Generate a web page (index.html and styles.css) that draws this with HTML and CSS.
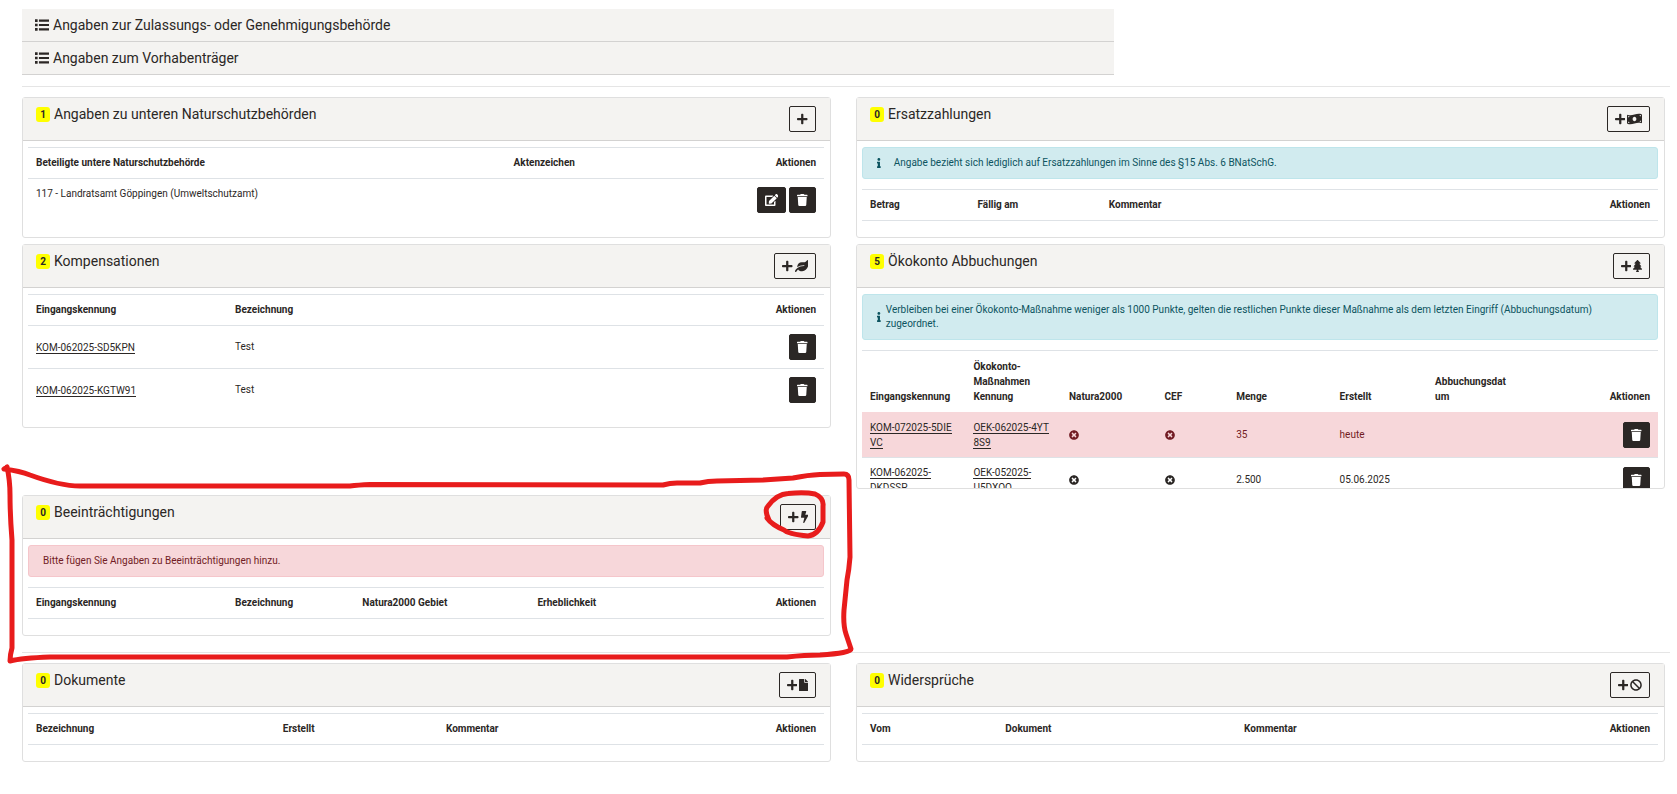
FILE: index.html
```
<!DOCTYPE html>
<html lang="de">
<head>
    <meta charset="UTF-8">
    <meta name="viewport" content="width=device-width, initial-scale=1.0">
    <title>Eingriff</title>
    <link rel="stylesheet" href="styles.css">
</head>
<body>
    <!-- Icon definitions, used through <use> below -->
    <svg class="icon-defs" aria-hidden="true">
        <defs>
            <path id="plus" d="M416 208H272V64c0-17.67-14.33-32-32-32h-32c-17.67 0-32 14.33-32 32v144H32c-17.67 0-32 14.33-32 32v32c0 17.67 14.33 32 32 32h144v144c0 17.67 14.33 32 32 32h32c17.67 0 32-14.33 32-32V304h144c17.67 0 32-14.33 32-32v-32c0-17.67-14.33-32-32-32z"/>
            <path id="trash" d="M432 32H312l-9.4-18.7A24 24 0 0 0 281.1 0H166.8a23.72 23.72 0 0 0-21.4 13.3L136 32H16A16 16 0 0 0 0 48v32a16 16 0 0 0 16 16h416a16 16 0 0 0 16-16V48a16 16 0 0 0-16-16zM53.2 467a48 48 0 0 0 47.9 45h245.8a48 48 0 0 0 47.9-45L416 128H32z"/>
            <path id="edit" d="M402.6 83.2l90.2 90.2c3.8 3.8 3.8 10 0 13.8L274.4 405.6l-92.8 10.3c-12.4 1.4-22.9-9.1-21.5-21.5l10.3-92.8L388.8 83.2c3.8-3.8 10-3.8 13.8 0zm162-22.9l-48.8-48.8c-15.2-15.2-39.9-15.2-55.2 0l-35.4 35.4c-3.8 3.8-3.8 10 0 13.8l90.2 90.2c3.8 3.8 10 3.8 13.8 0l35.4-35.4c15.2-15.3 15.2-40 0-55.2zM384 346.2V448H64V128h229.8c3.2 0 6.2-1.3 8.5-3.5l40-40c7.6-7.6 2.2-20.5-8.5-20.5H48C21.5 64 0 85.5 0 112v352c0 26.5 21.5 48 48 48h352c26.5 0 48-21.5 48-48V306.2c0-10.7-12.9-16-20.5-8.5l-40 40c-2.2 2.3-3.5 5.3-3.5 8.5z"/>
            <path id="leaf" d="M546.2 9.7c-5.6-12.5-21.6-13-28.3-1.2C486.9 62.4 431.4 96 368 96h-80C182 96 96 182 96 288c0 7 .8 13.7 1.5 20.5C161.3 262.8 253.4 224 384 224c8.8 0 16 7.2 16 16s-7.2 16-16 16C132.6 256 26 410.1 2.4 468c-6.6 16.3 1.2 34.9 17.5 41.6 16.4 6.8 35-1.1 41.8-17.3 1.5-3.6 20.9-47.9 71.9-90.6 32.4 43.9 94 85.8 174.9 77.2C465.5 467.5 576 326.7 576 154.3c0-50.2-10.8-102.2-29.8-144.6z"/>
            <path id="tree" d="M378.31 378.49L298.42 288h30.63c9.01 0 16.98-5 20.78-13.06 3.8-8.04 2.55-17.26-3.28-24.05L268.42 160h28.89c9.1 0 17.3-5.35 20.86-13.61 3.52-8.13 1.86-17.59-4.24-24.08L203.66 4.83c-6.03-6.45-17.28-6.45-23.32 0L70.06 122.31c-6.1 6.49-7.75 15.95-4.24 24.08C69.38 154.65 77.59 160 86.69 160h28.89l-78.14 90.91c-5.81 6.78-7.06 15.99-3.27 24.04C37.97 283 45.93 288 54.95 288h30.63L5.69 378.49c-6 6.79-7.36 16.09-3.56 24.26 3.75 8.05 12 13.25 21.01 13.25H160v24.45l-30.29 48.4c-5.32 10.64 2.42 23.16 14.31 23.16h95.96c11.89 0 19.63-12.52 14.31-23.16L224 440.45V416h136.86c9.01 0 17.26-5.2 21.01-13.25 3.8-8.17 2.44-17.47-3.56-24.26z"/>
            <path id="bolt" d="M296 160H180.6l42.6-129.8C227.2 15 215.7 0 200 0H56C44 0 33.8 8.9 32.2 20.8l-32 240C-1.7 275.2 9.5 288 24 288h118.7L96.6 482.5c-3.6 15.2 8 29.5 23.3 29.5 8.4 0 16.4-4.4 20.8-12l176-304c9.3-15.9-2.2-36-20.7-36z"/>
            <path id="file" d="M224 136V0H24C10.7 0 0 10.7 0 24v464c0 13.3 10.7 24 24 24h336c13.3 0 24-10.7 24-24V160H248c-13.2 0-24-10.8-24-24zm160-14.1v6.1H256V0h6.1c6.4 0 12.5 2.5 17 7l97.9 98c4.5 4.5 7 10.6 7 16.9z"/>
            <path id="ban" d="M256 8C119.034 8 8 119.033 8 256s111.034 248 248 248 248-111.034 248-248S392.967 8 256 8zm130.108 117.892c65.448 65.448 70 165.481 20.677 235.637L150.47 105.216c70.204-49.356 170.226-44.735 235.638 20.676zM125.892 386.108c-65.448-65.448-70-165.481-20.677-235.637L361.53 406.784c-70.203 49.356-170.226 44.736-235.638-20.676z"/>
            <path id="times" d="M256 8C119 8 8 119 8 256s111 248 248 248 248-111 248-248S393 8 256 8zm121.6 313.1c4.7 4.7 4.7 12.3 0 17L338 377.6c-4.7 4.7-12.3 4.7-17 0L256 312l-65.1 65.6c-4.7 4.7-12.3 4.7-17 0L134.4 338c-4.7-4.7-4.7-12.3 0-17l65.6-65-65.6-65.1c-4.7-4.7-4.7-12.3 0-17l39.6-39.6c4.7-4.7 12.3-4.7 17 0l65 65.7 65.1-65.6c4.7-4.7 12.3-4.7 17 0l39.6 39.6c4.7 4.7 4.7 12.3 0 17L312 256l65.6 65.1z"/>
            <path id="info" d="M20 424.229h20V279.771H20c-11.046 0-20-8.954-20-20V212c0-11.046 8.954-20 20-20h112c11.046 0 20 8.954 20 20v212.229h20c11.046 0 20 8.954 20 20V492c0 11.046-8.954 20-20 20H20c-11.046 0-20-8.954-20-20v-47.771c0-11.046 8.954-20 20-20zM96 0C56.235 0 24 32.235 24 72s32.235 72 72 72 72-32.235 72-72S135.764 0 96 0z"/>
            <path id="list" d="M0 48h96v96H0zM0 208h96v96H0zM0 368h96v96H0zM144 56h368v80H144zM144 216h368v80H144zM144 376h368v80H144z"/>
            <path id="money" d="M621.16 54.46C582.37 38.19 543.55 32 504.75 32c-123.17-.01-246.33 62.34-369.5 62.34-30.89 0-61.76-3.92-92.65-13.72-3.47-1.1-6.95-1.62-10.35-1.62C15.04 79 0 92.32 0 110.81v317.26c0 12.63 7.23 24.6 18.84 29.46C57.63 473.81 96.45 480 135.25 480c123.17 0 246.34-62.35 369.51-62.35 30.89 0 61.76 3.92 92.65 13.72 3.47 1.1 6.95 1.62 10.35 1.62 17.21 0 32.25-13.32 32.25-31.81V83.93c-.01-12.64-7.24-24.6-18.85-29.47zM48 132.22c20.12 5.04 41.12 7.57 62.72 8.93C104.84 170.54 79 192.69 48 192.69v-60.47zm0 285v-47.78c34.37 0 62.18 27.27 63.71 61.4-22.53-1.81-43.59-6.31-63.71-13.62zM320 352c-44.19 0-80-42.99-80-96 0-53.02 35.82-96 80-96s80 42.98 80 96c0 53.03-35.83 96-80 96zm272 27.78c-17.52-4.39-35.71-6.85-54.32-8.44 5.87-26.08 27.5-45.88 54.32-49.28v57.72zm0-236.11c-30.89-3.91-54.86-29.7-55.81-61.55 19.54 2.17 38.09 6.23 55.81 12.66v48.89z"/>
        </defs>
    </svg>

    <div class="accordion">
        <button type="button" class="accordion-item"><svg class="icon" viewBox="0 0 512 512"><use href="#list"/></svg>Angaben zur Zulassungs- oder Genehmigungsbehörde</button>
        <button type="button" class="accordion-item"><svg class="icon" viewBox="0 0 512 512"><use href="#list"/></svg>Angaben zum Vorhabenträger</button>
    </div>

    <hr>

    <div class="card-grid">
        <section class="card">
            <div class="card-header">
                <h5><span class="badge">1</span>Angaben zu unteren Naturschutzbehörden</h5>
                <button type="button" class="btn btn-outline" aria-label="Behörde hinzufügen"><svg class="icon" viewBox="0 0 448 512"><use href="#plus"/></svg></button>
            </div>
            <div class="card-body">
                <table class="table">
                    <colgroup><col class="w-60"><col><col class="w-10"></colgroup>
                    <thead>
                        <tr><th>Beteiligte untere Naturschutzbehörde</th><th>Aktenzeichen</th><th class="actions">Aktionen</th></tr>
                    </thead>
                    <tbody>
                        <tr>
                            <td>117 - Landratsamt Göppingen (Umweltschutzamt)</td>
                            <td></td>
                            <td class="actions">
                                <div class="btn-row">
                                    <button type="button" class="btn btn-dark" aria-label="Bearbeiten"><svg class="icon" viewBox="0 0 576 512"><use href="#edit"/></svg></button>
                                    <button type="button" class="btn btn-dark" aria-label="Löschen"><svg class="icon" viewBox="0 0 448 512"><use href="#trash"/></svg></button>
                                </div>
                            </td>
                        </tr>
                    </tbody>
                </table>
            </div>
        </section>

        <section class="card">
            <div class="card-header">
                <h5><span class="badge">0</span>Ersatzzahlungen</h5>
                <button type="button" class="btn btn-outline" aria-label="Ersatzzahlung hinzufügen"><svg class="icon" viewBox="0 0 448 512"><use href="#plus"/></svg><svg class="icon" viewBox="0 0 640 512"><use href="#money"/></svg></button>
            </div>
            <div class="card-body">
                <div class="alert alert-info alert-wide"><svg class="icon" viewBox="0 0 192 512"><use href="#info"/></svg>Angabe bezieht sich lediglich auf Ersatzzahlungen im Sinne des §15 Abs. 6 BNatSchG.</div>
                <table class="table">
                    <colgroup><col class="w-13-5"><col class="w-16-5"><col><col class="w-10"></colgroup>
                    <thead>
                        <tr><th>Betrag</th><th>Fällig am</th><th>Kommentar</th><th class="actions">Aktionen</th></tr>
                    </thead>
                    <tbody></tbody>
                </table>
            </div>
        </section>

        <section class="card">
            <div class="card-header">
                <h5><span class="badge">2</span>Kompensationen</h5>
                <button type="button" class="btn btn-outline" aria-label="Kompensation hinzufügen"><svg class="icon" viewBox="0 0 448 512"><use href="#plus"/></svg><svg class="icon" viewBox="0 0 576 512"><use href="#leaf"/></svg></button>
            </div>
            <div class="card-body">
                <table class="table table-middle">
                    <colgroup><col class="w-25"><col><col class="w-10"></colgroup>
                    <thead>
                        <tr><th>Eingangskennung</th><th>Bezeichnung</th><th class="actions">Aktionen</th></tr>
                    </thead>
                    <tbody>
                        <tr>
                            <td><a href="#">KOM-062025-SD5KPN</a></td>
                            <td>Test</td>
                            <td class="actions"><div class="btn-row"><button type="button" class="btn btn-dark" aria-label="Löschen"><svg class="icon" viewBox="0 0 448 512"><use href="#trash"/></svg></button></div></td>
                        </tr>
                        <tr>
                            <td><a href="#">KOM-062025-KGTW91</a></td>
                            <td>Test</td>
                            <td class="actions"><div class="btn-row"><button type="button" class="btn btn-dark" aria-label="Löschen"><svg class="icon" viewBox="0 0 448 512"><use href="#trash"/></svg></button></div></td>
                        </tr>
                    </tbody>
                </table>
            </div>
        </section>

        <section class="card card-scroll">
            <div class="card-header">
                <h5><span class="badge">5</span>Ökokonto Abbuchungen</h5>
                <button type="button" class="btn btn-outline" aria-label="Abbuchung hinzufügen"><svg class="icon" viewBox="0 0 448 512"><use href="#plus"/></svg><svg class="icon" viewBox="0 0 384 512"><use href="#tree"/></svg></button>
            </div>
            <div class="card-body">
                <div class="alert alert-info"><svg class="icon" viewBox="0 0 192 512"><use href="#info"/></svg><span>Verbleiben bei einer Ökokonto-Maßnahme weniger als 1000 Punkte, gelten die restlichen Punkte dieser Maßnahme als dem letzten Eingriff (Abbuchungsdatum) zugeordnet.</span></div>
                <table class="table table-middle">
                    <colgroup><col class="w-13"><col class="w-12"><col class="w-12"><col class="w-9"><col class="w-13"><col class="w-12"><col class="w-11"><col></colgroup>
                    <thead>
                        <tr><th>Eingangskennung</th><th>Ökokonto-Maßnahmen Kennung</th><th>Natura2000</th><th>CEF</th><th>Menge</th><th>Erstellt</th><th>Abbuchungsdatum</th><th class="actions">Aktionen</th></tr>
                    </thead>
                    <tbody>
                        <tr class="row-danger">
                            <td><a href="#">KOM-072025-5DIEVC</a></td>
                            <td><a href="#">OEK-062025-4YT8S9</a></td>
                            <td><svg class="icon icon-small" viewBox="0 0 512 512"><use href="#times"/></svg></td>
                            <td><svg class="icon icon-small" viewBox="0 0 512 512"><use href="#times"/></svg></td>
                            <td>35</td>
                            <td>heute</td>
                            <td></td>
                            <td class="actions"><div class="btn-row"><button type="button" class="btn btn-dark" aria-label="Löschen"><svg class="icon" viewBox="0 0 448 512"><use href="#trash"/></svg></button></div></td>
                        </tr>
                        <tr>
                            <td><a href="#">KOM-062025-DKDSSP</a></td>
                            <td><a href="#">OEK-052025-U5DXOO</a></td>
                            <td><svg class="icon icon-small" viewBox="0 0 512 512"><use href="#times"/></svg></td>
                            <td><svg class="icon icon-small" viewBox="0 0 512 512"><use href="#times"/></svg></td>
                            <td>2.500</td>
                            <td>05.06.2025</td>
                            <td></td>
                            <td class="actions"><div class="btn-row"><button type="button" class="btn btn-dark" aria-label="Löschen"><svg class="icon" viewBox="0 0 448 512"><use href="#trash"/></svg></button></div></td>
                        </tr>
                    </tbody>
                </table>
            </div>
        </section>

        <section class="card card-marked">
            <div class="card-header">
                <h5><span class="badge">0</span>Beeinträchtigungen</h5>
                <button type="button" class="btn btn-outline" aria-label="Beeinträchtigung hinzufügen"><svg class="icon" viewBox="0 0 448 512"><use href="#plus"/></svg><svg class="icon" viewBox="0 0 320 512"><use href="#bolt"/></svg></button>
            </div>
            <div class="card-body">
                <div class="alert alert-danger">Bitte fügen Sie Angaben zu Beeinträchtigungen hinzu.</div>
                <table class="table">
                    <colgroup><col class="w-25"><col class="w-16"><col class="w-22"><col><col class="w-10"></colgroup>
                    <thead>
                        <tr><th>Eingangskennung</th><th>Bezeichnung</th><th>Natura2000 Gebiet</th><th>Erheblichkeit</th><th class="actions">Aktionen</th></tr>
                    </thead>
                    <tbody></tbody>
                </table>
            </div>
            <!-- Hand-drawn marker around the card and its button -->
            <svg class="marker" viewBox="0 463 860 203" aria-hidden="true">
                <path d="M7 467L4 469Q20 471 30 475Q60 486 80 486L350 486Q358 485 370 484.500L663 485Q670 483 677 483L700 483Q708 481 717 481L763 480Q778 479 793 478Q808 475 820 474.500L844 474Q849 474 849 480L850 557Q849 570 847 580L844 610Q843 625 846 634L851 649Q851 653 820 655Q805 655 787 657L50 657Q22 658 10 661Q10 655 12 648L12 540Q10 515 10 495Q10 480 7 467"/>
                <path d="M769 520Q764 510 768 506Q777 494 788 493.500Q805 492 815 494Q824 498 823 506L823 522Q818 535 808 536Q788 534 784 530Q772 525 767 518"/>
            </svg>
        </section>
    </div>

    <hr class="hr-lower">

    <div class="card-grid">
        <section class="card">
            <div class="card-header">
                <h5><span class="badge">0</span>Dokumente</h5>
                <button type="button" class="btn btn-outline" aria-label="Dokument hinzufügen"><svg class="icon" viewBox="0 0 448 512"><use href="#plus"/></svg><svg class="icon" viewBox="0 0 384 512"><use href="#file"/></svg></button>
            </div>
            <div class="card-body">
                <table class="table">
                    <colgroup><col class="w-31"><col class="w-20-5"><col><col class="w-10"></colgroup>
                    <thead>
                        <tr><th>Bezeichnung</th><th>Erstellt</th><th>Kommentar</th><th class="actions">Aktionen</th></tr>
                    </thead>
                    <tbody></tbody>
                </table>
            </div>
        </section>

        <section class="card">
            <div class="card-header">
                <h5><span class="badge">0</span>Widersprüche</h5>
                <button type="button" class="btn btn-outline" aria-label="Widerspruch hinzufügen"><svg class="icon" viewBox="0 0 448 512"><use href="#plus"/></svg><svg class="icon" viewBox="0 0 512 512"><use href="#ban"/></svg></button>
            </div>
            <div class="card-body">
                <table class="table">
                    <colgroup><col class="w-17"><col class="w-30"><col><col class="w-10"></colgroup>
                    <thead>
                        <tr><th>Vom</th><th>Dokument</th><th>Kommentar</th><th class="actions">Aktionen</th></tr>
                    </thead>
                    <tbody></tbody>
                </table>
            </div>
        </section>
    </div>
</body>
</html>
```
FILE: styles.css
```
* {
    box-sizing: border-box;
}
body {
    font-family: Roboto, "Liberation Sans", sans-serif;
    font-size: 10px;
    line-height: 14px;
    margin: 0;
    padding: 9px 7px 9px 22px;
    background-color: #fff;
    color: #2b2725;
}
h5 {
    display: flex;
    align-items: center;
    gap: 4px;
    margin: 0;
    font-size: 14px;
    font-weight: 400;
    line-height: 17px;
}
hr {
    height: 1px;
    margin: 11px 0 10px;
    border: 0;
    background-color: #e5e5e5;
}
.hr-lower {
    margin-top: 16px;
}
a {
    color: #2b2725;
    text-decoration: none;
    border-bottom: 1px solid #2b2725;
    line-height: 15px;
}

/* Icons */
.icon-defs {
    display: none;
}
.icon {
    height: 12px;
    fill: currentColor;
    flex: none;
}
.icon-small {
    height: 10px;
    vertical-align: middle;
}

/* Collapsed sections on top */
.accordion {
    width: calc(66.6667% - 7px);
}
.accordion-item {
    display: flex;
    align-items: center;
    gap: 4px;
    width: 100%;
    height: 33px;
    padding: 0 13px;
    border: 0;
    border-bottom: 1px solid #d3d2d1;
    background-color: #f4f3f1;
    color: #2b2725;
    font-family: inherit;
    font-size: 14px;
    text-align: left;
}
.accordion-item .icon {
    height: 14px;
}

/* Cards */
.card-grid {
    display: grid;
    grid-template-columns: 1fr 1fr;
    align-items: start;
    gap: 6px 25px;
    padding-right: 5px;
}
.card {
    min-width: 0;
    border: 1px solid #dfdfdf;
    border-radius: 3px;
    background-color: #fff;
}
.card-scroll {
    max-height: 245px;
    overflow: hidden;
}
.card-header {
    display: flex;
    justify-content: space-between;
    align-items: flex-start;
    padding: 8px 14px 8px 13px;
    border-bottom: 1px solid #d3d2d1;
    background-color: #f4f3f1;
}
.card-body {
    padding: 6px 6px 0 5px;
}
.badge {
    min-width: 14px;
    padding: 0 4px;
    border-radius: 3px;
    background-color: #ff0;
    font-size: 10px;
    font-weight: 700;
    line-height: 15px;
    text-align: center;
}

/* Buttons */
.btn {
    display: flex;
    align-items: center;
    justify-content: center;
    gap: 2px;
    min-width: 27px;
    height: 26px;
    padding: 0 7px;
    border: 1px solid #2b2725;
    border-radius: 2px;
}
.btn-outline {
    background-color: transparent;
    color: #2b2725;
}
.btn-dark {
    background-color: #2b2725;
    color: #fff;
}
.btn-row {
    display: flex;
    justify-content: flex-end;
    gap: 3px;
}

/* Alerts */
.alert {
    display: flex;
    align-items: center;
    gap: 5px;
    margin-bottom: 10px;
    padding: 8px 14px;
    border: 1px solid transparent;
    border-radius: 3px;
}
.alert .icon {
    height: 10px;
}
.alert-wide {
    gap: 13px;
}
.alert-info {
    background-color: #d1ebef;
    border-color: #bee5eb;
    color: #0c5460;
}
.alert-danger {
    background-color: #f7d7da;
    border-color: #f5c6cb;
    color: #721c24;
}

/* Tables */
.table {
    width: 100%;
    margin-bottom: 16px;
    table-layout: fixed;
    border-collapse: collapse;
    border-bottom: 1px solid #dee2e6;
}
.table th,
.table td {
    padding: 8px;
    border-top: 1px solid #dee2e6;
    text-align: left;
    vertical-align: top;
    overflow-wrap: anywhere;
}
.table th {
    font-weight: 700;
    vertical-align: bottom;
}
.card-scroll th {
    line-height: 15px;
}
.card-scroll .table td {
    padding: 7px 8px;
}
.table .actions {
    text-align: right;
}
.table-middle td {
    vertical-align: middle;
}
.table:has(td) {
    border-bottom: 0;
}
.table .row-danger td {
    background-color: #f7d7da;
    border-color: #f7d7da;
    color: #721c24;
}
.row-danger a {
    word-break: break-all;
}
.w-9 { width: 9%; }
.w-10 { width: 10%; }
.w-11 { width: 11%; }
.w-12 { width: 12%; }
.w-13 { width: 13%; }
.w-13-5 { width: 13.5%; }
.w-16 { width: 16%; }
.w-16-5 { width: 16.5%; }
.w-17 { width: 17%; }
.w-20-5 { width: 20.5%; }
.w-22 { width: 22%; }
.w-25 { width: 25%; }
.w-30 { width: 30%; }
.w-31 { width: 31%; }
.w-60 { width: 60%; }

/* Red marker, lies over the card and sticks out on every side */
.card-marked {
    position: relative;
}
.marker {
    position: absolute;
    top: -33px;
    left: -23px;
    width: calc(100% + 53px);
    fill: none;
    stroke: #e81c1c;
    stroke-width: 5;
    stroke-linecap: round;
    stroke-linejoin: round;
    pointer-events: none;
}
@media (max-width: 900px) {
    .card-grid {
        grid-template-columns: 1fr;
    }
    .accordion {
        width: 100%;
    }
}
```
